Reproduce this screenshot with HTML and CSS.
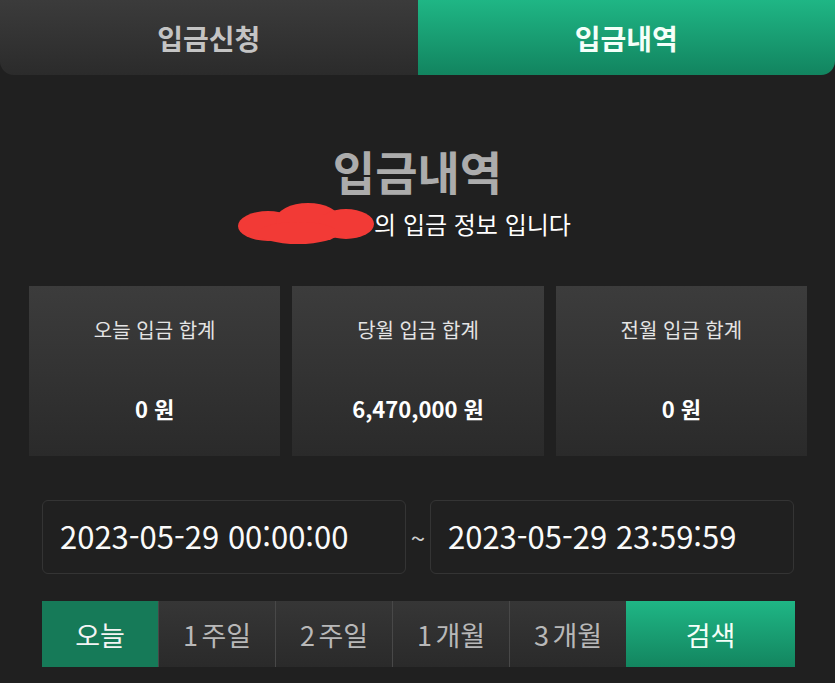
FILE: index.html
```html
<!DOCTYPE html>
<html lang="ko">
<head>
  <meta charset="UTF-8">
  <meta name="viewport" content="width=device-width, initial-scale=1.0">
  <link rel="stylesheet" href="styles.css">
  <title>입금내역</title>
</head>
<body>
  <div class="tabs">
    <div class="tab">입금신청</div>
    <div class="tab tab-on">입금내역</div>
  </div>

  <div class="head">
    <h1>입금내역</h1>
    <p class="who">
      <svg class="mask" width="136" height="46" viewBox="0 0 136 46">
        <ellipse cx="30" cy="26" rx="30" ry="15" fill="#f23a36"/>
        <ellipse cx="70" cy="20" rx="32" ry="17" fill="#f23a36"/>
        <ellipse cx="108" cy="24" rx="28" ry="15" fill="#f23a36"/>
        <ellipse cx="60" cy="33" rx="40" ry="11" fill="#f23a36"/>
      </svg><span>의 입금 정보 입니다</span>
    </p>
  </div>

  <div class="cards">
    <div class="card">
      <p class="card-label">오늘 입금 합계</p>
      <p class="card-value">0 원</p>
    </div>
    <div class="card">
      <p class="card-label">당월 입금 합계</p>
      <p class="card-value">6,470,000 원</p>
    </div>
    <div class="card">
      <p class="card-label">전월 입금 합계</p>
      <p class="card-value">0 원</p>
    </div>
  </div>

  <div class="dates">
    <div class="date-box">2023-05-29 00:00:00</div>
    <span class="tilde">~</span>
    <div class="date-box">2023-05-29 23:59:59</div>
  </div>

  <div class="periods">
    <button class="period period-on">오늘</button>
    <button class="period">1 주일</button>
    <button class="period">2 주일</button>
    <button class="period">1 개월</button>
    <button class="period">3 개월</button>
    <button class="btn-search">검색</button>
  </div>
</body>
</html>
```

FILE: styles.css
```css
body {
  font-family: "Noto Sans CJK KR", "Noto Sans", sans-serif;
  background-color: #202020;
  margin: 0;
  padding: 0;
  width: 835px;
  height: 683px;
  overflow: hidden;
  color: #fff;
}

.tabs {
  display: flex;
  height: 75px;
}

.tab {
  flex: 1;
  display: flex;
  align-items: center;
  justify-content: center;
  font-size: 28px;
  font-weight: 700;
  color: #c4c4c4;
  background: linear-gradient(#3b3b3b, #2b2b2b);
  border-bottom-left-radius: 14px;
}

.tab-on {
  color: #f4fff9;
  background: linear-gradient(#1fb685, #12845f);
  border-bottom-left-radius: 0;
  border-bottom-right-radius: 14px;
}

.head {
  text-align: center;
  padding-top: 62px;
}

.head h1 {
  font-size: 46px;
  font-weight: 700;
  color: #acacac;
  margin: 0;
  line-height: 66px;
}

.who {
  display: flex;
  justify-content: center;
  align-items: center;
  margin: -3px 0 0 -26px;
  font-size: 24px;
  color: #fff;
  height: 46px;
}

.who .mask {
  display: block;
}

.cards {
  display: flex;
  gap: 12px;
  padding: 40px 28px 0 29px;
}

.card {
  flex: 1;
  height: 170px;
  background: linear-gradient(#3c3c3c, #2a2a2a);
  text-align: center;
}

.card-label {
  font-size: 20px;
  color: #e4e4e4;
  margin: 29px 0 0;
}

.card-value {
  font-size: 22px;
  font-weight: 700;
  margin: 48px 0 0;
}

.dates {
  display: flex;
  align-items: center;
  padding: 44px 41px 0 42px;
}

.date-box {
  flex: 1;
  height: 72px;
  border: 1px solid #343434;
  border-radius: 6px;
  font-size: 31px;
  line-height: 70px;
  padding-left: 17px;
  color: #fafafa;
}

.tilde {
  width: 24px;
  text-align: center;
  color: #ccc;
  font-size: 26px;
}

.periods {
  display: flex;
  margin: 27px 40px 0 42px;
  height: 66px;
}

.period {
  width: 117px;
  border: none;
  border-left: 1px solid #484848;
  background: linear-gradient(#363636, #2a2a2a);
  color: #b8b8b8;
  font-family: inherit;
  font-size: 27px;
  padding: 0;
  word-spacing: -4px;
}

.period-on {
  width: 116px;
  border-left: none;
  background: #167a58;
  color: #f4f4f4;
}

.btn-search {
  flex: 1;
  border: none;
  background: linear-gradient(#1fb685, #13855f);
  color: #f4fff9;
  font-family: inherit;
  font-size: 27px;
  padding: 0;
}
```
